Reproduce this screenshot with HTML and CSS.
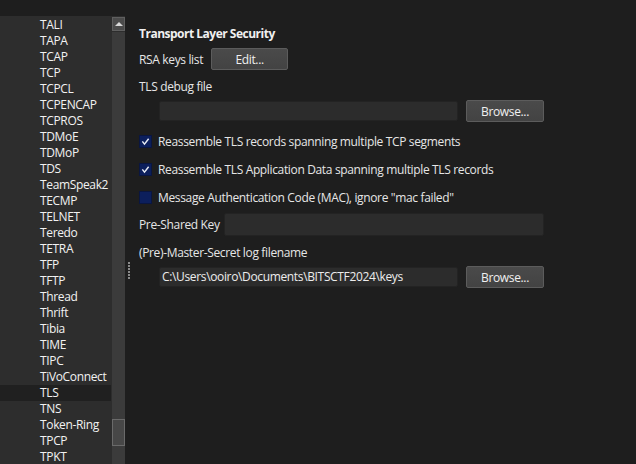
FILE: index.html
```html
<!DOCTYPE html>
<html>
<head>
<meta charset="utf-8">
<link rel="stylesheet" href="styles.css">
</head>
<body>
<div class="app">
  <div class="sidebar">
    <div class="topstrip"></div>
    <div class="listwrap">
      <ul class="list">
        <li>TALI</li><li>TAPA</li><li>TCAP</li><li>TCP</li><li>TCPCL</li><li>TCPENCAP</li><li>TCPROS</li><li>TDMoE</li><li>TDMoP</li><li>TDS</li><li>TeamSpeak2</li><li>TECMP</li><li>TELNET</li><li>Teredo</li><li>TETRA</li><li>TFP</li><li>TFTP</li><li>Thread</li><li>Thrift</li><li>Tibia</li><li>TIME</li><li>TIPC</li><li>TiVoConnect</li><li class="selected">TLS</li><li>TNS</li><li>Token-Ring</li><li>TPCP</li><li>TPKT</li>
      </ul>
      <div class="scrollbar">
        <div class="sb-up"><span class="sb-arrow"></span></div>
        <div class="sb-track">
          <div class="sb-thumb"></div>
        </div>
      </div>
    </div>
  </div>
  <div class="splitter"><div class="grip"><i></i><i></i><i></i><i></i><i></i><i></i></div></div>
  <div class="content">
    <div class="row title">Transport Layer Security</div>
    <div class="row r-rsa"><span>RSA keys list</span><button class="btn btn-edit">Edit...</button></div>
    <div class="row r-label1">TLS debug file</div>
    <div class="row r-file"><div class="input input-file"></div><button class="btn btn-browse">Browse...</button></div>
    <div class="row r-cb"><span class="cb checked"><svg viewBox="0 0 13 13" width="13" height="13"><path d="M2.8 6.4 L5.3 9.6 L10.2 3.2" fill="none" stroke="#e8ecf5" stroke-width="1.7"/></svg></span><span>Reassemble TLS records spanning multiple TCP segments</span></div>
    <div class="row r-cb"><span class="cb checked"><svg viewBox="0 0 13 13" width="13" height="13"><path d="M2.8 6.4 L5.3 9.6 L10.2 3.2" fill="none" stroke="#e8ecf5" stroke-width="1.7"/></svg></span><span>Reassemble TLS Application Data spanning multiple TLS records</span></div>
    <div class="row r-cb"><span class="cb"></span><span>Message Authentication Code (MAC), ignore "mac failed"</span></div>
    <div class="row r-psk"><span>Pre-Shared Key</span><div class="input input-psk"></div></div>
    <div class="row r-label2">(Pre)-Master-Secret log filename</div>
    <div class="row r-file2"><div class="input input-file">C:\Users\ooiro\Documents\BITSCTF2024\keys</div><button class="btn btn-browse">Browse...</button></div>
  </div>
</div>
</body>
</html>
```
FILE: styles.css
```css
* { box-sizing: border-box; }
html, body { margin: 0; padding: 0; }
body {
  background: #1e1e1e;
  color: #e6e6e6;
  font-family: "Open Sans", "Noto Sans", sans-serif;
  font-size: 12px;
  letter-spacing: -0.35px;
  overflow: hidden;
}
.app {
  display: flex;
  height: 464px;
  width: 636px;
  overflow: hidden;
}
.sidebar {
  width: 125px;
  display: flex;
  flex-direction: column;
  flex: none;
}
.topstrip { height: 16px; background: #1e1e1e; flex: none; }
.listwrap {
  flex: 1;
  display: flex;
  background: #2d2d2d;
  overflow: hidden;
}
.list {
  list-style: none;
  margin: 0;
  padding: 1px 0 0 0;
  width: 111px;
  flex: none;
  overflow: hidden;
}
.list li {
  height: 16px;
  line-height: 16px;
  padding-left: 40px;
  color: #f2f2f2;
  white-space: nowrap;
}
.list li.selected { background: #202020; }
.scrollbar {
  width: 14px;
  flex: none;
  display: flex;
  flex-direction: column;
  background: #2d2d2d;
  padding: 1px 0 0 1px;
}
.sb-up {
  height: 14px;
  background: #4b4b4b;
  border: 1px solid #5f5f5f;
  display: flex;
  align-items: center;
  justify-content: center;
  flex: none;
}
.sb-arrow {
  width: 0; height: 0;
  border-left: 4px solid transparent;
  border-right: 4px solid transparent;
  border-bottom: 4px solid #d8d8d8;
}
.sb-track {
  flex: 1;
  background: #3b3b3b;
  margin-top: 1px;
  padding-top: 387px;
}
.sb-thumb {
  height: 27px;
  background: #474747;
  border: 1px solid #6a6a6a;
}
.splitter {
  width: 14px;
  flex: none;
  padding: 262px 0 0 3px;
}
.grip { display: flex; flex-direction: column; gap: 1px; }
.grip i { display: block; width: 2px; height: 2px; background: #8a8a8a; }
.content {
  flex: 1;
  display: flex;
  flex-direction: column;
  padding: 24px 92px 0 0;
}
.row {
  display: flex;
  align-items: center;
  white-space: nowrap;
}
.title { height: 18px; font-weight: bold; color: #f0f0f0; letter-spacing: -0.5px; }
.r-rsa { height: 22px; margin-top: 6px; gap: 8px; }
.r-label1 { height: 16px; margin-top: 8px; }
.r-file { height: 22px; margin-top: 6px; padding-left: 20px; gap: 8px; }
.r-cb { height: 18px; margin-top: 10px; gap: 6px; }
.r-psk { height: 24px; margin-top: 6px; gap: 4px; }
.r-label2 { height: 16px; margin-top: 8px; }
.r-file2 { height: 22px; margin-top: 6px; padding-left: 20px; gap: 8px; }
.btn {
  font: inherit;
  letter-spacing: inherit;
  color: #f0f0f0;
  background: linear-gradient(#4a4a4a, #434343);
  border: 1px solid #5c5c5c;
  border-radius: 2px;
  height: 22px;
  padding: 0;
  display: flex;
  align-items: center;
  justify-content: center;
  flex: none;
}
.btn-edit { width: 77px; }
.btn-browse { width: 78px; }
.input {
  background: #2c2c2c;
  border: 1px solid #232323;
  border-radius: 2px;
  height: 20px;
  line-height: 18px;
  padding-left: 2px;
  color: #ececec;
  flex: 1;
}
.input-psk { height: 23px; }
.cb {
  width: 13px;
  height: 13px;
  background: #0c1f5c;
  border: 1px solid #0a1640;
  display: flex;
  align-items: center;
  justify-content: center;
  flex: none;
}
.cb svg { display: block; }
```
